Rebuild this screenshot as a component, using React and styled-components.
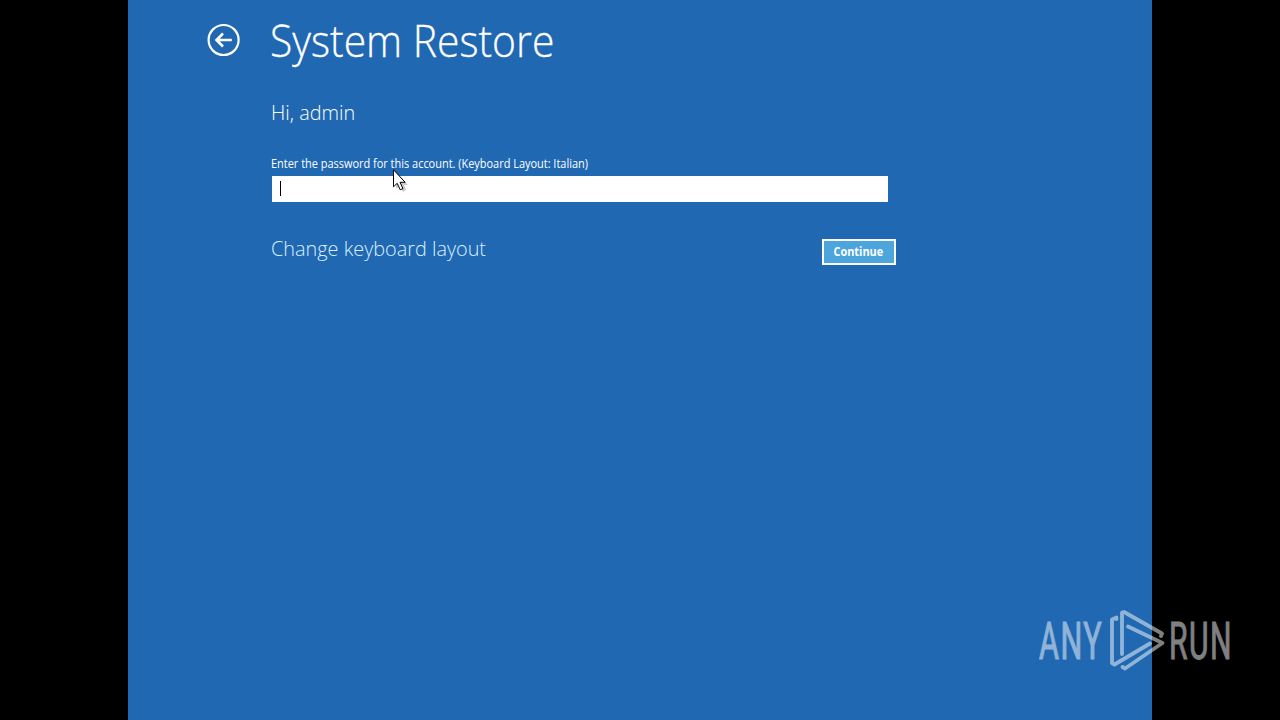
import React from 'react';
import styled, { createGlobalStyle } from 'styled-components';

const GlobalStyle = createGlobalStyle`
  * {
    box-sizing: border-box;
  }

  body {
    margin: 0;
    background: #000;
    font-family: 'Open Sans', 'Noto Sans', sans-serif;
    overflow: hidden;
  }
`;

const Page = styled.div`
  position: relative;
  display: flex;
  justify-content: center;
  width: 1280px;
  height: 720px;
  background: #000;
`;

const Screen = styled.main`
  width: 1024px;
  height: 720px;
  padding: 10px 0 0 79px;
  background: #2068b2;
  color: #fff;
`;

const Header = styled.header`
  display: flex;
  align-items: center;
  height: 60px;
`;

const BackButton = styled.button`
  display: flex;
  width: 34px;
  height: 34px;
  margin-right: 29px;
  padding: 0;
  border: 0;
  background: none;
`;

const Line = styled.span`
  display: block;
  width: max-content;
  white-space: nowrap;
  transform: scaleX(${(props) => props.$stretch || 1});
  transform-origin: ${(props) => props.$origin || '0 50%'};
`;

const Title = styled.h1`
  margin: 0;
  font-size: 45px;
  font-weight: 300;
  line-height: 60px;
  -webkit-text-stroke: 0.3px #fff;
`;

const Content = styled.section`
  width: 625px;
  margin-left: 64px;
`;

const Greeting = styled.h2`
  margin: 27px 0 0;
  font-size: 21px;
  font-weight: 300;
  line-height: 30px;
`;

const Label = styled.label`
  display: block;
  margin-top: 27px;
  font-size: 12px;
  line-height: 20px;
`;

const PasswordBox = styled.div`
  display: flex;
  align-items: center;
  width: 616px;
  height: 26px;
  margin: 2px 0 0 1px;
  padding: 0 0 1px 8px;
  background: #fff;
`;

const Caret = styled.span`
  width: 1px;
  height: 15px;
  background: #000;
`;

const Footer = styled.div`
  display: flex;
  justify-content: space-between;
  margin-top: 37px;
`;

const LayoutLink = styled.a`
  margin-top: -6px;
  color: #d9efff;
  font-size: 21px;
  font-weight: 300;
  line-height: 30px;
`;

const ContinueButton = styled.button`
  display: flex;
  align-items: center;
  justify-content: center;
  width: 74px;
  height: 26px;
  padding: 0 1px 1px 0;
  border: 2px solid #fff;
  background: #4ca5dc;
  color: #fff;
  font-family: inherit;
  font-size: 12px;
  font-weight: 700;
`;

const Pointer = styled.svg`
  position: absolute;
  left: 393px;
  top: 169px;
`;

const Watermark = styled.svg`
  position: absolute;
  left: 1030px;
  top: 600px;
  opacity: 0.5;
`;

function BackIcon() {
  return (
    <svg width="34" height="34" viewBox="0 0 34 34" fill="none" stroke="#fff">
      <circle cx="16.6" cy="17" r="15" strokeWidth="2.2" />
      <path d="M24.8 17H10M16 10.5L9.5 17l6.5 6.5" strokeWidth="2.6" />
    </svg>
  );
}

function App() {
  return (
    <Page>
      <GlobalStyle />
      <Screen>
        <Header>
          <BackButton aria-label="Back">
            <BackIcon />
          </BackButton>
          <Title>
            <Line $stretch={0.907}>System Restore</Line>
          </Title>
        </Header>
        <Content>
          <Greeting>
            <Line $stretch={0.945}>Hi, admin</Line>
          </Greeting>
          <Label>
            <Line $stretch={0.912}>
              Enter the password for this account. (Keyboard Layout: Italian)
            </Line>
          </Label>
          <PasswordBox>
            <Caret />
          </PasswordBox>
          <Footer>
            <LayoutLink>
              <Line $stretch={0.945}>Change keyboard layout</Line>
            </LayoutLink>
            <ContinueButton>
              <Line $stretch={0.91} $origin="50% 50%">Continue</Line>
            </ContinueButton>
          </Footer>
        </Content>
      </Screen>

      <Pointer width="16" height="24" viewBox="0 0 16 24">
        <path d="M3 3v17l4-3 3 6 3-2-2-5h4z" fill="#000" opacity="0.2" />
        <path d="M.5.8v17l3.7-3.5 3 6.5 2.8-1.200-3-6.300h5.200z" fill="#fff" stroke="#000" />
      </Pointer>

      <Watermark width="230" height="100" viewBox="0 0 230 100">
        <g
          fill="#fff"
          stroke="#fff"
          strokeWidth="1"
          fontFamily="Roboto, sans-serif"
          fontSize="51"
          letterSpacing="2.5"
        >
          <text transform="translate(9 59) scale(0.6 1)">ANY</text>
          <text transform="translate(139 59) scale(0.59 1)">RUN</text>
        </g>
        <g fill="none" stroke="#fff" strokeWidth="3.8" strokeLinejoin="round" strokeLinecap="round">
          <path d="M86.5 19v-1.5l-4.5 2V63l2.5 1.5L120 43.5" />
          <path d="M92 54V12.5l2-.5L132 33.5l-1 2.5" />
          <path d="M98 26.5L132.5 43 95 68.5l-2.5-1.5" />
        </g>
      </Watermark>
    </Page>
  );
}

export default App;
